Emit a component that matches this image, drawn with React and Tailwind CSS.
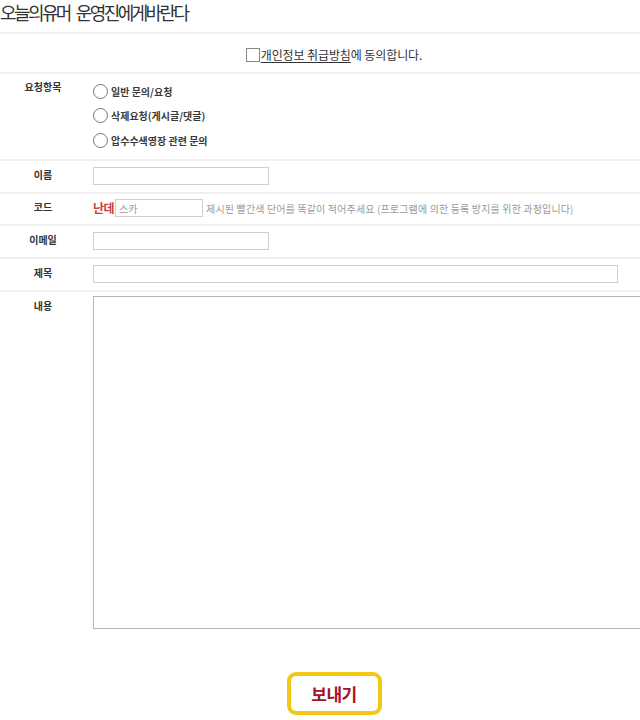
export default function App() {
  const font = { fontFamily: '"Noto Sans CJK KR", "Noto Sans", sans-serif' };
  const Label = ({ children, className = "" }) => (
    <div className={"w-[86px] shrink-0 text-center text-[10px] font-bold text-[#333] " + className}>{children}</div>
  );
  const Radio = ({ children }) => (
    <div className="flex h-[24.5px] items-center">
      <span className="box-border h-[15px] w-[15px] rounded-full border border-[#777] bg-white"></span>
      <span className="ml-[3px] text-[10px] font-bold text-[#3a3a3a]">{children}</span>
    </div>
  );
  const input = "box-border h-[18px] border border-[#cfcfcf] bg-white";
  return (
    <div className="h-[720px] w-[640px] overflow-hidden bg-white" style={font}>
      <div className="w-[668px]">
        <div className="flex h-[32px] whitespace-nowrap pt-[1px] text-[18px] leading-[22px] tracking-[-2.6px] text-[#333]">
          <span>오늘의유머</span>
          <span className="ml-[6px]">운영진에게바란다</span>
        </div>
        <div className="border-t-2 border-[#efefef]"></div>
        <div className="flex h-[38px] items-center justify-center pt-[4px] text-[12px] tracking-[-0.1px] text-[#333]">
          <span className="box-border h-[14px] w-[14px] border border-[#888] bg-white"></span>
          <span className="ml-[1px] underline underline-offset-2">개인정보 취급방침</span>
          <span>에 동의합니다.</span>
        </div>
        <div className="border-t-2 border-[#efefef]"></div>
        <div className="flex h-[85px]">
          <Label className="pt-[6px] leading-[14px]">요청항목</Label>
          <div className="ml-[7px] pt-[5px]">
            <Radio>일반 문의/요청</Radio>
            <Radio>삭제요청(게시글/댓글)</Radio>
            <Radio>압수수색영장 관련 문의</Radio>
          </div>
        </div>
        <div className="border-t-2 border-[#efefef]"></div>
        <div className="flex h-[31px] items-center pb-[1px]">
          <Label className="pb-[3px]">이름</Label>
          <div className={input + " ml-[7px] w-[176px]"}></div>
        </div>
        <div className="border-t-2 border-[#efefef]"></div>
        <div className="flex h-[30px] items-center pb-[2px]">
          <Label className="pb-[3px]">코드</Label>
          <span className="ml-[7px] text-[12px] font-bold tracking-[-0.5px] text-[#cc3b36]">난데</span>
          <div className={input + " ml-[1px] flex w-[88px] items-center pl-[3px] text-[10px] text-[#999]"}>스카</div>
          <span className="ml-[3px] whitespace-nowrap text-[10px] tracking-[0.15px] text-[#9a9a9a]">제시된 빨간색 단어를 똑같이 적어주세요 (프로그램에 의한 등록 방지를 위한 과정입니다)</span>
        </div>
        <div className="border-t-2 border-[#efefef]"></div>
        <div className="flex h-[31px] items-center pb-[1px]">
          <Label className="pb-[3px]">이메일</Label>
          <div className={input + " ml-[7px] w-[176px]"}></div>
        </div>
        <div className="border-t-2 border-[#efefef]"></div>
        <div className="flex h-[31px] items-center pb-[1px]">
          <Label className="pb-[3px]">제목</Label>
          <div className={input + " ml-[7px] w-[525px]"}></div>
        </div>
        <div className="border-t-2 border-[#efefef]"></div>
        <div className="flex pt-[4px]">
          <Label className="pt-[3px] leading-[14px]">내용</Label>
          <div className="ml-[7px] box-border h-[333px] w-[575px] border border-[#b5b5b5] bg-white"></div>
        </div>
        <div className="mt-[43px] flex justify-center">
          <div className="box-border flex h-[43px] w-[95px] items-center justify-center rounded-[9px] border-[4px] border-[#f3c814] bg-white text-[17px] font-bold tracking-[-0.5px] text-[#a5122a]">
            보내기
          </div>
        </div>
      </div>
    </div>
  );
}
